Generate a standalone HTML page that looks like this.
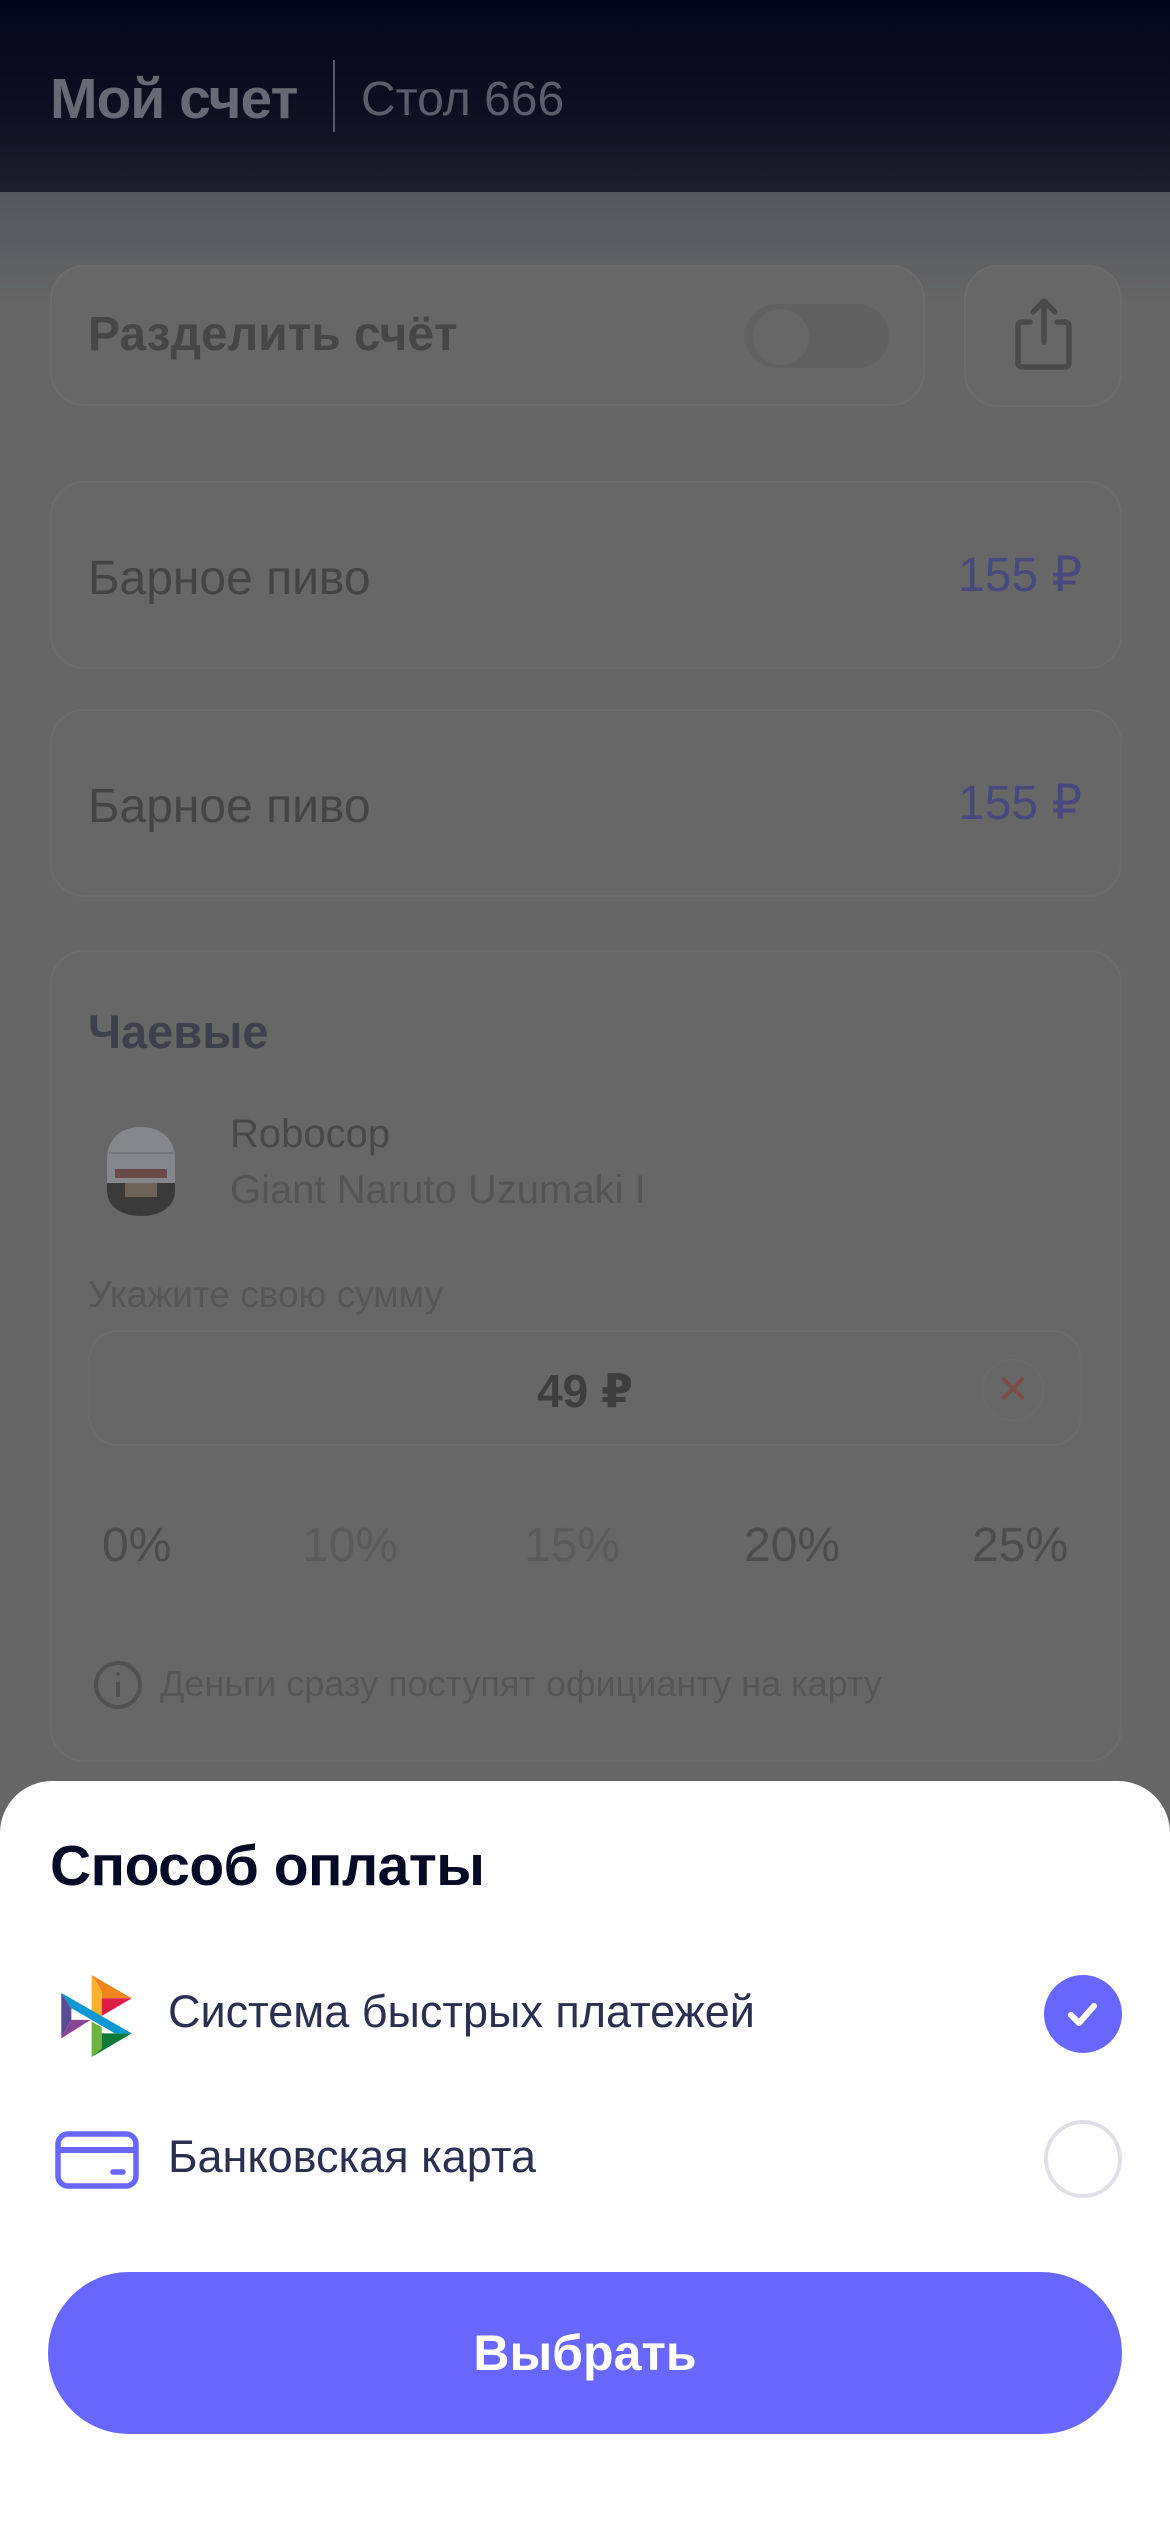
<!DOCTYPE html>
<html><head><meta charset="utf-8">
<style>
*{margin:0;padding:0;box-sizing:border-box}
body{width:1170px;height:2532px;position:relative;overflow:hidden;background:#666;font-family:"Liberation Sans","DejaVu Sans",sans-serif}
.hdr{position:absolute;left:0;top:0;width:1170px;height:192px;background:linear-gradient(#02061a 0%,#0b0f20 55%,#1c1f2c 100%)}
.hdr .t{position:absolute;left:50px;top:66px;font-size:57px;font-weight:bold;color:#666a74;letter-spacing:-1px}
.hdr .d{position:absolute;left:333px;top:60px;width:2px;height:72px;background:#555a66}
.hdr .s{position:absolute;left:361px;top:72px;font-size:48px;color:#5a5e6a}
.shade{position:absolute;left:0;top:192px;width:1170px;height:120px;background:linear-gradient(#55575c,#666)}
.card{position:absolute;border:2px solid #6c6c6c;border-radius:34px;background:#676767}
.gt{position:absolute;color:#444;font-size:48px}
.pr{position:absolute;color:#48487e;font-size:48px}
.sheet{position:absolute;left:0;top:1781px;width:1170px;height:760px;background:#fff;border-radius:52px 52px 0 0}
</style></head><body>
<div class="hdr"><div class="t">Мой счет</div><div class="d"></div><div class="s">Стол 666</div></div>
<div class="shade"></div>

<div class="card" style="left:50px;top:265px;width:875px;height:141px">
 <div class="gt" style="left:36px;top:40px;font-weight:bold;font-size:48px;color:#464646">Разделить счёт</div>
 <div style="position:absolute;left:693px;top:37px;width:144px;height:64px;border-radius:32px;background:#616161"></div>
 <div style="position:absolute;left:701px;top:42px;width:56px;height:56px;border-radius:28px;background:#676767"></div>
</div>
<div class="card" style="left:964px;top:265px;width:158px;height:142px">
 <svg width="158" height="142" style="position:absolute;left:-2px;top:-2px" viewBox="964 265 158 142" fill="none" stroke="#4a4a4a" stroke-width="5.5" stroke-linecap="round" stroke-linejoin="round">
  <path d="M1030 322h-8a4 4 0 0 0-4 4v37a4 4 0 0 0 4 4h43a4 4 0 0 0 4-4v-37a4 4 0 0 0-4-4h-8"/>
  <path d="M1044 342V302M1033 312l11-11 11 11"/>
 </svg>
</div>

<div class="card" style="left:50px;top:481px;width:1072px;height:188px">
 <div class="gt" style="left:36px;top:68px">Барное пиво</div><div class="pr" style="top:64px;right:38px">155 ₽</div>
</div>
<div class="card" style="left:50px;top:709px;width:1072px;height:188px">
 <div class="gt" style="left:36px;top:68px">Барное пиво</div><div class="pr" style="top:64px;right:38px">155 ₽</div>
</div>

<div class="card" style="left:50px;top:950px;width:1072px;height:812px">
 <div class="gt" style="left:36px;top:52px;font-weight:bold;font-size:47px;color:#3e404c">Чаевые</div>
 <svg style="position:absolute;left:53px;top:173px" width="72" height="92" viewBox="0 0 72 92">
  <path d="M2 55v10c0 18 16 26 34 26s34-8 34-26V55z" fill="#3a3a3a"/>
  <rect x="20" y="58" width="32" height="14" fill="#6d6358"/>
  <path d="M36 2C16 2 2 14 2 34v24h68V34C70 14 56 2 36 2z" fill="#85878c"/>
  <rect x="10" y="44" width="52" height="9" fill="#6a4a48"/>
  <line x1="4" y1="28" x2="68" y2="28" stroke="#74767a" stroke-width="2"/>
 </svg>
 <div class="gt" style="left:178px;top:160px;font-size:40px;color:#484848">Robocop</div>
 <div class="gt" style="left:178px;top:216px;font-size:40px;color:#545454">Giant Naruto Uzumaki I</div>
 <div class="gt" style="left:36px;top:322px;font-size:37px;color:#555">Укажите свою сумму</div>
 <div style="position:absolute;left:36px;top:378px;width:994px;height:116px;border:2px solid #6c6c6c;border-radius:30px">
  <div style="position:absolute;left:0;width:100%;top:32px;text-align:center;font-size:46px;font-weight:bold;color:#3e3e3e">49 ₽</div>
  <div style="position:absolute;right:36px;top:27px;width:62px;height:62px;border-radius:31px;border:1px solid #6c6c6c;color:#7a4c4c;font-size:40px;text-align:center;line-height:60px">✕</div>
 </div>
 <div class="gt" style="left:50px;top:566px;font-size:48px;color:#4c4c4c">0%</div>
 <div class="gt" style="left:250px;top:566px;font-size:48px;color:#5a5a5a">10%</div>
 <div class="gt" style="left:472px;top:566px;font-size:48px;color:#5a5a5a">15%</div>
 <div class="gt" style="left:692px;top:566px;font-size:48px;color:#4c4c4c">20%</div>
 <div class="gt" style="left:920px;top:566px;font-size:48px;color:#4c4c4c">25%</div>
 <svg style="position:absolute;left:40px;top:707px" width="52" height="52" viewBox="0 0 52 52" fill="none" stroke="#505050" stroke-width="4"><circle cx="26" cy="26" r="22"/><line x1="26" y1="23" x2="26" y2="38"/><circle cx="26" cy="15" r="2" fill="#505050" stroke="none"/></svg>
 <div class="gt" style="left:108px;top:711px;font-size:36px;color:#555">Деньги сразу поступят официанту на карту</div>
</div>

<div class="sheet">
 <div style="position:absolute;left:50px;top:52px;font-size:57px;font-weight:bold;color:#070a24;letter-spacing:-0.5px">Способ оплаты</div>
 <svg style="position:absolute;left:61px;top:194px" width="71" height="82" viewBox="63 107 209 243">
  <polygon points="153,107 272,176 183,176 183,155" fill="#f0851e"/>
  <polygon points="153,107 183,155 183,232 153,215" fill="#fbb22a"/>
  <polygon points="183,176 272,176 183,228" fill="#de1c48"/>
  <polygon points="63,160 93,205 93,240 63,295" fill="#5a4e92"/>
  <polygon points="63,295 150,240 93,240" fill="#8a4594"/>
  <polygon points="153,245 183,262 183,325 153,350" fill="#6db33f"/>
  <polygon points="153,350 272,280 183,280 183,325" fill="#0b7a3a"/>
  <polygon points="63,160 272,280 222,280 93,205" fill="#0d97d4"/>
 </svg>
 <div style="position:absolute;left:168px;top:205px;font-size:45px;color:#2c3050">Система быстрых платежей</div>
 <div style="position:absolute;left:1044px;top:194px;width:78px;height:78px;border-radius:39px;background:#6966ff">
  <svg width="78" height="78" viewBox="0 0 78 78" fill="none" stroke="#fff" stroke-width="6" stroke-linecap="round" stroke-linejoin="round"><path d="M27 40l8 8 15-17"/></svg>
 </div>
 <svg style="position:absolute;left:55px;top:350px" width="84" height="58" viewBox="0 0 84 58" fill="none" stroke="#6966ff" stroke-width="5.5"><rect x="3" y="3" width="78" height="52" rx="10"/><line x1="3" y1="19" x2="81" y2="19" stroke-width="6"/><line x1="58" y1="41" x2="68" y2="41" stroke-linecap="round" stroke-width="5.5"/></svg>
 <div style="position:absolute;left:168px;top:350px;font-size:45px;color:#2c3050">Банковская карта</div>
 <div style="position:absolute;left:1044px;top:339px;width:78px;height:78px;border-radius:39px;border:4px solid #dfe0e6"></div>
 <div style="position:absolute;left:48px;top:491px;width:1074px;height:162px;border-radius:81px;background:#6966ff;color:#fff;font-size:50px;font-weight:bold;text-align:center;line-height:162px">Выбрать</div>
</div>
</body></html>
